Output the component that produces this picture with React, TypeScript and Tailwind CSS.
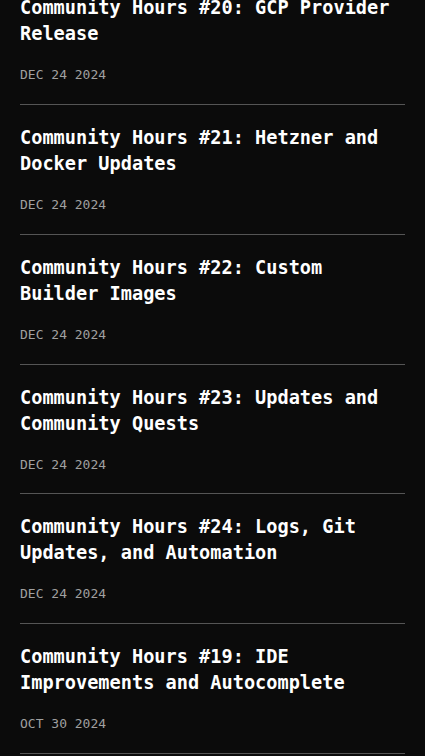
const posts = [
  { title: 'Community Hours #20: GCP Provider Release', date: 'DEC 24 2024' },
  { title: 'Community Hours #21: Hetzner and Docker Updates', date: 'DEC 24 2024' },
  { title: 'Community Hours #22: Custom Builder Images', date: 'DEC 24 2024' },
  { title: 'Community Hours #23: Updates and Community Quests', date: 'DEC 24 2024' },
  { title: 'Community Hours #24: Logs, Git Updates, and Automation', date: 'DEC 24 2024' },
  { title: 'Community Hours #19: IDE Improvements and Autocomplete', date: 'OCT 30 2024' },
];

export default function App() {
  return (
    <main
      className="h-[756px] overflow-hidden bg-[#0b0b0b] px-5"
      style={{ fontFamily: '"DejaVu Sans Mono", "Liberation Mono", monospace' }}
    >
      {/* list is scrolled: first title is partly cut off */}
      <ul className="-mt-[24.8px]">
        {posts.map((post) => (
          <li key={post.title} className="border-b border-[#555555] pt-5 pb-[18.8px]">
            <h3 className="text-[18.6px] leading-[26px] font-semibold text-white">
              {post.title}
            </h3>
            <p className="mt-[18px] text-[13px] leading-5 text-[#a0a0a0]">{post.date}</p>
          </li>
        ))}
      </ul>
    </main>
  );
}
